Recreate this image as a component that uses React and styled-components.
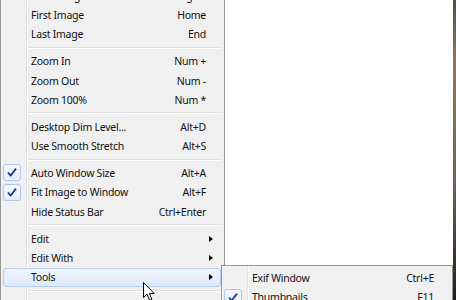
import React from 'react';
import styled, { createGlobalStyle } from 'styled-components';

const GlobalStyle = createGlobalStyle`
  html, body {
    margin: 0;
    padding: 0;
    background: #fff;
  }
  body {
    font-family: 'Noto Sans', 'Open Sans', sans-serif;
  }
`;

const Screen = styled.div`
  position: relative;
  display: flex;
  width: 456px;
  height: 300px;
  overflow: hidden;
  background: #fff;
`;

const Menu = styled.div`
  box-sizing: border-box;
  flex: 0 0 225px;
  align-self: flex-start;
  margin-top: -17px;
  padding: 2px 3px 2px 2px;
  border: 1px solid #979797;
  background: linear-gradient(
    to right,
    #f0f0f0 0 25px,
    #e2e3e3 25px 26px,
    #ffffff 26px 27px,
    #f0f0f0 27px
  );
`;

const SubMenu = styled(Menu)`
  position: absolute;
  left: 221px;
  top: 265px;
  width: 232px;
  margin-top: 0;
`;

const Content = styled.div`
  flex: 1;
  background: #fff;
`;

const Frame = styled.div`
  flex: 0 0 3px;
  background: linear-gradient(#4d4d4d, #8a7a62 20%, #6d6458 60%, #1e1e1e);
`;

const Row = styled.div`
  box-sizing: border-box;
  display: grid;
  grid-template-columns: 18px 1fr auto 14px;
  align-items: center;
  height: 19.4px;
  border: 1px solid ${(p) => (p.$hot ? '#b2cdef' : 'transparent')};
  border-radius: 3px;
  background: ${(p) => (p.$hot ? 'linear-gradient(#eef4fc, #dfeafa)' : 'transparent')};
  font-size: 10.5px;
  letter-spacing: -0.25px;
  color: #111;
  white-space: nowrap;
`;

const Label = styled.span`
  padding-left: 9px;
`;

const Shortcut = styled.span`
  text-align: right;
`;

const Arrow = styled.span`
  justify-self: start;
  margin-left: 3px;
  width: 0;
  height: 0;
  border-top: 3.5px solid transparent;
  border-bottom: 3.5px solid transparent;
  border-left: 4px solid #000;
`;

const CheckBox = styled.span`
  box-sizing: border-box;
  display: flex;
  align-items: center;
  justify-content: center;
  width: 18px;
  height: 17px;
  margin-left: -1px;
  border: 1px solid #adc8ee;
  border-radius: 3px;
  background: linear-gradient(#f4f8fd, #e6eefa);
`;

const Separator = styled.div`
  display: flex;
  align-items: center;
  height: 7.4px;
  margin: 0 -1px 0 25px;

  &::before {
    content: '';
    flex: 1;
    height: 0;
    border-top: 1px solid #e0e0e0;
    border-bottom: 1px solid #fff;
  }
`;

const Cursor = styled.svg`
  position: absolute;
  left: 143px;
  top: 282px;
`;

function Check() {
  return (
    <svg width="12" height="11" viewBox="0 0 12 11">
      <path d="M2 5.5 L4.6 8.6 L10 1.6" fill="none" stroke="#1f3f8c" strokeWidth="1.8" strokeLinejoin="round" />
    </svg>
  );
}

function Item({ label, shortcut, checked, sub, hot }) {
  return (
    <Row $hot={hot}>
      {checked ? (
        <CheckBox>
          <Check />
        </CheckBox>
      ) : (
        <span />
      )}
      <Label>{label}</Label>
      <Shortcut>{shortcut}</Shortcut>
      {sub ? <Arrow /> : <span />}
    </Row>
  );
}

export default function App() {
  return (
    <>
      <GlobalStyle />
      <Screen>
        <Menu>
          <Item label="Next Image" shortcut="PgDn" />
          <Item label="First Image" shortcut="Home" />
          <Item label="Last Image" shortcut="End" />
          <Separator />
          <Item label="Zoom In" shortcut="Num +" />
          <Item label="Zoom Out" shortcut="Num -" />
          <Item label="Zoom 100%" shortcut="Num *" />
          <Separator />
          <Item label="Desktop Dim Level..." shortcut="Alt+D" />
          <Item label="Use Smooth Stretch" shortcut="Alt+S" />
          <Separator />
          <Item label="Auto Window Size" shortcut="Alt+A" checked />
          <Item label="Fit Image to Window" shortcut="Alt+F" checked />
          <Item label="Hide Status Bar" shortcut="Ctrl+Enter" />
          <Separator />
          <Item label="Edit" sub />
          <Item label="Edit With" sub />
          <Item label="Tools" sub hot />
          <Separator />
          <Item />
        </Menu>
        <Content />
        <Frame />
        <SubMenu>
          <Item label="Exif Window" shortcut="Ctrl+E" />
          <Item label="Thumbnails" shortcut="F11" checked />
        </SubMenu>
        <Cursor width="13" height="20" viewBox="0 0 13 20">
          <path
            d="M0.5 0.5 L0.5 15.5 L4 12.2 L6.6 18.3 L8.8 17.4 L6.3 11.5 L11.2 11.5 Z"
            fill="#fff"
            stroke="#000"
            strokeWidth="1"
            strokeLinejoin="round"
          />
        </Cursor>
      </Screen>
    </>
  );
}
